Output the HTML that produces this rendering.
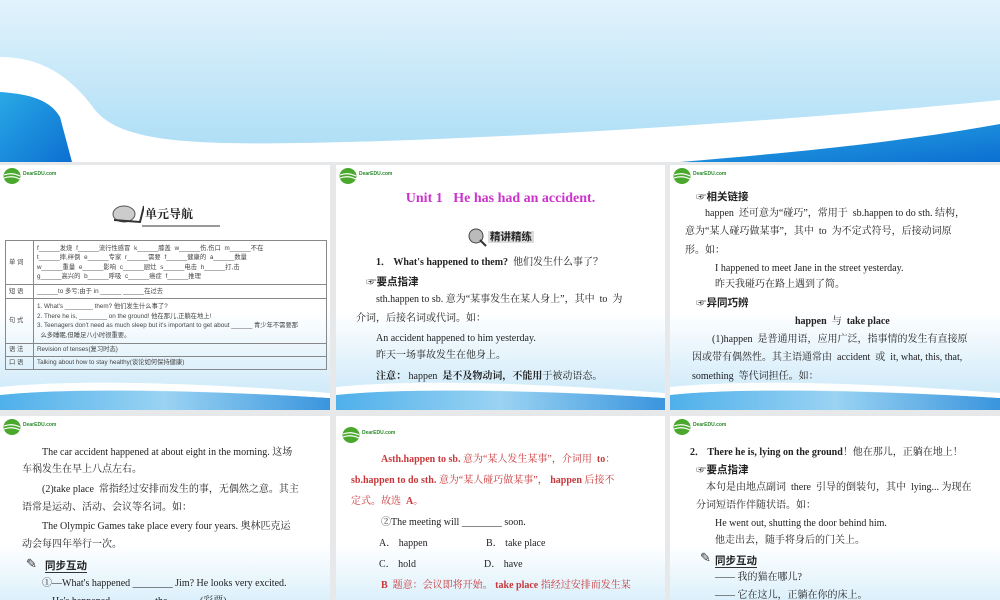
<!DOCTYPE html>
<html><head><meta charset="utf-8"><style>
*{margin:0;padding:0;box-sizing:border-box}
body{width:1000px;height:600px;overflow:hidden;background:#e6e8ea;position:relative;font-family:"Liberation Serif","Noto Serif CJK SC",serif;color:#222}
.s{position:absolute;overflow:hidden;background:#fff}
.s svg.bg{position:absolute;left:0;top:0}
.t{position:absolute;white-space:nowrap;font-size:10px;line-height:12px}
.b{font-weight:bold}
.h{font-family:"Liberation Sans","Noto Sans CJK SC",sans-serif;font-weight:bold;font-size:10.5px}
.logo{position:absolute;left:3px;top:2px}
.r{color:#c8373a}
table{border-collapse:collapse;font-family:"Liberation Sans","Noto Sans CJK SC",sans-serif;font-size:6.3px;color:#444}
td{border:1px solid #888;padding:0 3px;line-height:9.5px;vertical-align:middle}
</style></head><body>
<svg width="1000" height="162" style="position:absolute;left:0;top:0">
<defs><linearGradient id="sky" x1="0" y1="0" x2="0" y2="1"><stop offset="0" stop-color="#e2f3fc"/><stop offset="1" stop-color="#a9dcf5"/></linearGradient>
<linearGradient id="deep" x1="0" y1="0" x2="1" y2="1"><stop offset="0" stop-color="#29a9e6"/><stop offset="1" stop-color="#0c6fd1"/></linearGradient></defs>
<rect width="1000" height="162" fill="url(#sky)"/>
<path d="M0 57 C40 57 70 75 95 110 C120 140 180 145 300 143 C500 140 800 120 1000 100 L1000 162 L0 162 Z" fill="#fff"/>
<path d="M0 92 C30 94 50 100 60 117 L72 162 L0 162 Z" fill="url(#deep)"/>
<path d="M680 162 C800 152 900 142 1000 124 L1000 162 Z" fill="url(#deep)"/>
</svg>

<svg width="0" height="0" style="position:absolute"><defs>
<linearGradient id="g1" x1="0" y1="0" x2="0" y2="1"><stop offset="0.6" stop-color="#fff"/><stop offset="1" stop-color="#c6e6f8"/></linearGradient>
<linearGradient id="bb" x1="0" y1="0" x2="1" y2="0"><stop offset="0" stop-color="#4fb0ea"/><stop offset="0.5" stop-color="#9ad3f3"/><stop offset="1" stop-color="#3a95dd"/></linearGradient>
<linearGradient id="g2" x1="0" y1="0" x2="0" y2="1"><stop offset="0.7" stop-color="#fff"/><stop offset="1" stop-color="#dcf0fb"/></linearGradient>
</defs></svg>

<div class="s" style="left:0;top:165px;width:330px;height:245px">
<svg class="bg" width="330" height="245"><rect width="330" height="245" fill="url(#g1)"/><path d="M0 230 C60 223 200 225 330 233 L330 245 L0 245Z" fill="url(#bb)"/><path d="M0 222 C80 214 200 218 330 228 L330 233 C200 225 80 222 0 230Z" fill="#fff"/></svg>
<svg class="logo" width="60" height="18"><ellipse cx="9" cy="9" rx="8.5" ry="8" fill="#4aa82c"/><path d="M1 8 Q9 5 17 9 M1 11 Q9 8 17 12" stroke="#fff" stroke-width="1.2" fill="none"/><text x="20" y="8" font-size="5" font-family="Liberation Sans" fill="#2a8a2a" font-weight="bold">DearEDU.com</text></svg>
<svg style="position:absolute;left:110px;top:37px" width="34" height="24"><ellipse cx="14" cy="12" rx="11" ry="8" fill="#ccc" stroke="#555"/><path d="M4 18 L30 20 L34 4" stroke="#333" stroke-width="2" fill="none"/></svg>
<div class="t" style="left:145px;top:43px;font-size:12px;font-weight:bold;font-family:'Noto Serif CJK SC',serif">单元导航</div>
<div style="position:absolute;left:142px;top:60px;width:78px;height:2px;background:#999"></div>
<table style="position:absolute;left:5px;top:75px;width:322px">
<tr style="height:44px"><td style="width:28px">单 词</td><td style="word-spacing:2px">f______发烧 f______流行性感冒 k______膝盖 w______伤,伤口 m______不在<br>t______摔,绊倒 e______专家 r______需要 f______健康的 a______数量<br>w______重量 e______影响 c______厨灶 s______电击 h______打,击<br>g______高兴的 b______呼吸 c______癌症 f______推理</td></tr>
<tr style="height:14px"><td>短 语</td><td>______to 多亏;由于 in ______ ______在过去</td></tr>
<tr style="height:45px"><td>句 式</td><td>1. What's ________ them? 他们发生什么事了?<br>2. There he is, ________ on the ground! 他在那儿,正躺在地上!<br>3. Teenagers don't need as much sleep but it's important to get about ______ 青少年不需要那<br>&nbsp;&nbsp;么多睡眠,但睡足八小时很重要。</td></tr>
<tr style="height:13px"><td>语 法</td><td>Revision of tenses(复习时态)</td></tr>
<tr style="height:13px"><td>口 语</td><td>Talking about how to stay healthy(谈论如何保持健康)</td></tr>
</table>
</div>

<div class="s" style="left:336px;top:165px;width:329px;height:245px">
<svg class="bg" width="329" height="245"><rect width="329" height="245" fill="url(#g1)"/><path d="M0 230 C60 223 200 225 329 233 L329 245 L0 245Z" fill="url(#bb)"/><path d="M0 222 C80 214 200 218 329 228 L329 233 C200 225 80 222 0 230Z" fill="#fff"/></svg>
<svg class="logo" width="60" height="18"><ellipse cx="9" cy="9" rx="8.5" ry="8" fill="#4aa82c"/><path d="M1 8 Q9 5 17 9 M1 11 Q9 8 17 12" stroke="#fff" stroke-width="1.2" fill="none"/><text x="20" y="8" font-size="5" font-family="Liberation Sans" fill="#2a8a2a" font-weight="bold">DearEDU.com</text></svg>
<div class="t b" style="left:0;width:329px;text-align:center;top:26px;font-size:14px;line-height:16px;color:#cc33cc">Unit 1 &nbsp;&nbsp;He has had an accident.</div>
<svg style="position:absolute;left:130px;top:62px" width="22" height="20"><circle cx="10" cy="9" r="7" fill="#bbb" stroke="#444"/><path d="M14 13 L20 19" stroke="#333" stroke-width="2"/></svg>
<div class="t h" style="left:152px;top:66px;background:#ddd;padding:0 2px">精讲精练</div>
<div class="t" style="left:40px;top:92px"><b>1． What's happened to them?</b> &nbsp;他们发生什么事了？</div>
<div class="t h" style="left:30px;top:111px">☞要点指津</div>
<div class="t" style="left:40px;top:129px">sth.happen to sb. 意为“某事发生在某人身上”，其中 &nbsp;to &nbsp;为</div>
<div class="t" style="left:20px;top:148px">介词，后接名词或代词。如：</div>
<div class="t" style="left:40px;top:168px">An accident happened to him yesterday.</div>
<div class="t" style="left:40px;top:185px">昨天一场事故发生在他身上。</div>
<div class="t" style="left:40px;top:206px"><b>注意：</b> happen &nbsp;<b>是不及物动词，不能用</b>于被动语态。</div>
</div>

<div class="s" style="left:670px;top:165px;width:330px;height:245px">
<svg class="bg" width="330" height="245"><rect width="330" height="245" fill="url(#g1)"/><path d="M0 230 C60 223 200 225 330 233 L330 245 L0 245Z" fill="url(#bb)"/><path d="M0 222 C80 214 200 218 330 228 L330 233 C200 225 80 222 0 230Z" fill="#fff"/></svg>
<svg class="logo" width="60" height="18"><ellipse cx="9" cy="9" rx="8.5" ry="8" fill="#4aa82c"/><path d="M1 8 Q9 5 17 9 M1 11 Q9 8 17 12" stroke="#fff" stroke-width="1.2" fill="none"/><text x="20" y="8" font-size="5" font-family="Liberation Sans" fill="#2a8a2a" font-weight="bold">DearEDU.com</text></svg>
<div class="t h" style="left:26px;top:26px">☞相关链接</div>
<div class="t" style="left:35px;top:43px">happen &nbsp;还可意为“碰巧”，常用于 &nbsp;sb.happen to do sth. 结构，</div>
<div class="t" style="left:15px;top:61px">意为“某人碰巧做某事”，其中 &nbsp;to &nbsp;为不定式符号，后接动词原</div>
<div class="t" style="left:15px;top:80px">形。如：</div>
<div class="t" style="left:45px;top:98px">I happened to meet Jane in the street yesterday.</div>
<div class="t" style="left:45px;top:114px">昨天我碰巧在路上遇到了简。</div>
<div class="t h" style="left:26px;top:132px">☞异同巧辨</div>
<div class="t b" style="left:125px;top:151px">happen &nbsp;<span style="font-weight:normal">与</span> &nbsp;take place</div>
<div class="t" style="left:42px;top:169px">(1)happen &nbsp;是普通用语，应用广泛，指事情的发生有直接原</div>
<div class="t" style="left:22px;top:187px">因或带有偶然性。其主语通常由 &nbsp;accident &nbsp;或 &nbsp;it, what, this, that,</div>
<div class="t" style="left:22px;top:206px">something &nbsp;等代词担任。如：</div>
</div>

<div class="s" style="left:0;top:416px;width:330px;height:184px">
<svg class="bg" width="330" height="184"><rect width="330" height="184" fill="url(#g2)"/></svg>
<svg class="logo" width="60" height="18"><ellipse cx="9" cy="9" rx="8.5" ry="8" fill="#4aa82c"/><path d="M1 8 Q9 5 17 9 M1 11 Q9 8 17 12" stroke="#fff" stroke-width="1.2" fill="none"/><text x="20" y="8" font-size="5" font-family="Liberation Sans" fill="#2a8a2a" font-weight="bold">DearEDU.com</text></svg>
<div class="t" style="left:42px;top:31px">The car accident happened at about eight in the morning. 这场</div>
<div class="t" style="left:22px;top:48px">车祸发生在早上八点左右。</div>
<div class="t" style="left:42px;top:68px">(2)take place &nbsp;常指经过安排而发生的事，无偶然之意。其主</div>
<div class="t" style="left:22px;top:86px">语常是运动、活动、会议等名词。如：</div>
<div class="t" style="left:42px;top:105px">The Olympic Games take place every four years. 奥林匹克运</div>
<div class="t" style="left:22px;top:123px">动会每四年举行一次。</div>
<div class="t" style="left:26px;top:142px;font-size:13px;color:#333">✎</div>
<div class="t h" style="left:45px;top:144px;border-bottom:1px solid #333">同步互动</div>
<div class="t" style="left:42px;top:162px">①—What's happened ________ Jim? He looks very excited.</div>
<div class="t" style="left:42px;top:180px">—He's happened ________ the ______(彩票)</div>
</div>

<div class="s" style="left:336px;top:416px;width:329px;height:184px">
<svg class="bg" width="329" height="184"><rect width="329" height="184" fill="url(#g2)"/></svg>
<svg class="logo" width="60" height="18" style="top:10px;left:6px"><ellipse cx="9" cy="9" rx="8.5" ry="8" fill="#4aa82c"/><path d="M1 8 Q9 5 17 9 M1 11 Q9 8 17 12" stroke="#fff" stroke-width="1.2" fill="none"/><text x="20" y="8" font-size="5" font-family="Liberation Sans" fill="#2a8a2a" font-weight="bold">DearEDU.com</text></svg>
<div class="t r" style="left:45px;top:38px"><b>Asth.happen to sb.</b> 意为“某人发生某事”，介词用 &nbsp;<b>to</b>：</div>
<div class="t r" style="left:15px;top:59px"><b>sb.happen to do sth.</b> 意为“某人碰巧做某事”， <b>happen</b> 后接不</div>
<div class="t r" style="left:15px;top:80px">定式。故选 &nbsp;<b>A</b>。</div>
<div class="t" style="left:45px;top:101px">②The meeting will ________ soon.</div>
<div class="t" style="left:43px;top:122px">A． happen</div><div class="t" style="left:150px;top:122px">B． take place</div>
<div class="t" style="left:43px;top:143px">C． hold</div><div class="t" style="left:148px;top:143px">D． have</div>
<div class="t r" style="left:45px;top:164px"><b>B</b> &nbsp;题意：会议即将开始。 <b>take place</b> 指经过安排而发生某</div>
</div>

<div class="s" style="left:670px;top:416px;width:330px;height:184px">
<svg class="bg" width="330" height="184"><rect width="330" height="184" fill="url(#g2)"/></svg>
<svg class="logo" width="60" height="18"><ellipse cx="9" cy="9" rx="8.5" ry="8" fill="#4aa82c"/><path d="M1 8 Q9 5 17 9 M1 11 Q9 8 17 12" stroke="#fff" stroke-width="1.2" fill="none"/><text x="20" y="8" font-size="5" font-family="Liberation Sans" fill="#2a8a2a" font-weight="bold">DearEDU.com</text></svg>
<div class="t" style="left:20px;top:31px"><b>2． There he is, lying on the ground</b>！他在那儿，正躺在地上！</div>
<div class="t h" style="left:26px;top:48px">☞要点指津</div>
<div class="t" style="left:36px;top:66px">本句是由地点副词 &nbsp;there &nbsp;引导的倒装句，其中 &nbsp;lying... 为现在</div>
<div class="t" style="left:26px;top:84px">分词短语作伴随状语。如：</div>
<div class="t" style="left:45px;top:102px">He went out, shutting the door behind him.</div>
<div class="t" style="left:45px;top:119px">他走出去，随手将身后的门关上。</div>
<div class="t" style="left:30px;top:136px;font-size:13px;color:#333">✎</div>
<div class="t h" style="left:45px;top:139px;border-bottom:1px solid #333">同步互动</div>
<div class="t" style="left:45px;top:156px">—— 我的猫在哪儿?</div>
<div class="t" style="left:45px;top:174px">—— 它在这儿，正躺在你的床上。</div>
</div>
</body></html>
